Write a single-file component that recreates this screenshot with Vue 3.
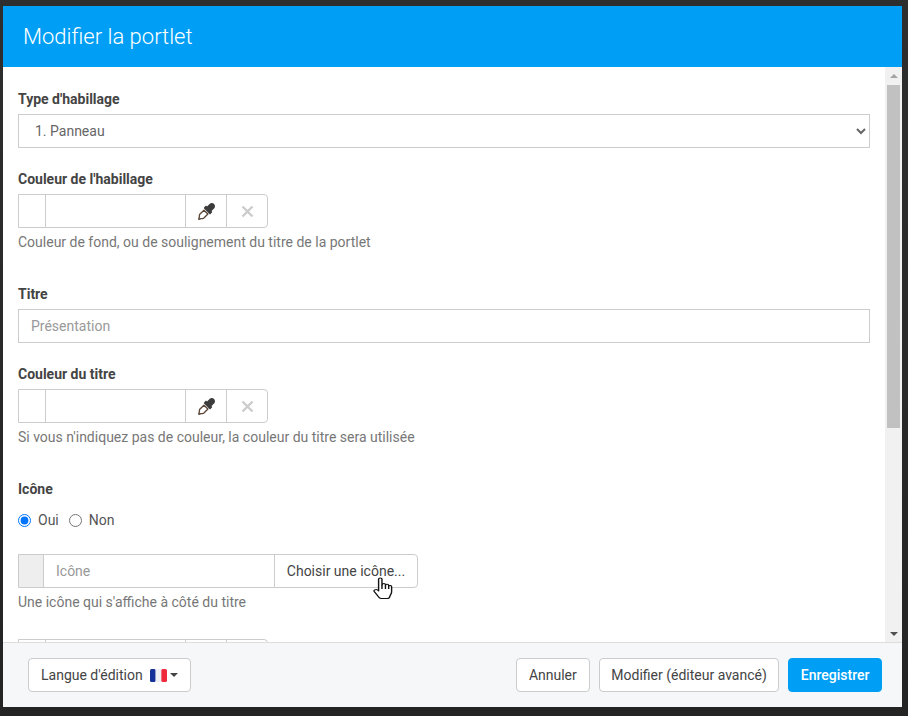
<script setup>
const head = 'M483.88 28.12c-37.47-37.5-98.28-37.5-135.75 0l-77.09 77.09-13.1-13.1c-9.44-9.44-24.65-9.31-33.94 0l-40.97 40.97c-9.37 9.37-9.37 24.57 0 33.94l161.94 161.94c9.44 9.44 24.65 9.31 33.94 0L419.88 288c9.37-9.37 9.37-24.57 0-33.94l-13.1-13.1 77.09-77.09c37.5-37.48 37.5-98.26.01-135.75z'
const tube = 'M60 333c-12 12-18 28-18 45v46L20 480l12 12 56-22h45c17 0 33-7 45-18l120-118-118-118L60 333z'
</script>

<template>
  <div class="page">
    <div class="modal">
      <header class="head">Modifier la portlet</header>
      <div class="middle">
        <div class="content">
          <div class="field f-type">
            <label>Type d'habillage</label>
            <select class="control select"><option>1. Panneau</option></select>
          </div>

          <div class="field f-color">
            <label>Couleur de l'habillage</label>
            <div class="group">
              <span class="swatch"></span>
              <input class="color-input" type="text" />
              <button class="addon pick"><svg width="17" height="17" viewBox="0 0 512 512"><path class="tube" :d="tube" /><path class="tip" :d="head" /></svg></button>
              <button class="addon clear"><svg width="13" height="13" viewBox="0 0 13 13"><path d="M1.500 1.500l10 10M11.500 1.500l-10 10" /></svg></button>
            </div>
            <p class="help">Couleur de fond, ou de soulignement du titre de la portlet</p>
          </div>

          <div class="field f-title">
            <label>Titre</label>
            <input class="control text" type="text" placeholder="Présentation" />
          </div>

          <div class="field f-color2">
            <label>Couleur du titre</label>
            <div class="group">
              <span class="swatch"></span>
              <input class="color-input" type="text" />
              <button class="addon pick"><svg width="17" height="17" viewBox="0 0 512 512"><path class="tube" :d="tube" /><path class="tip" :d="head" /></svg></button>
              <button class="addon clear"><svg width="13" height="13" viewBox="0 0 13 13"><path d="M1.500 1.500l10 10M11.500 1.500l-10 10" /></svg></button>
            </div>
            <p class="help">Si vous n'indiquez pas de couleur, la couleur du titre sera utilisée</p>
          </div>

          <div class="field f-icon">
            <label>Icône</label>
            <div class="radios">
              <span class="radio"><input type="radio" name="ic" checked /> Oui</span>
              <span class="radio"><input type="radio" name="ic" /> Non</span>
            </div>
            <div class="group icon-group">
              <span class="icon-swatch"></span>
              <input class="icon-input" type="text" placeholder="Icône" />
              <button class="choose">Choisir une icône...</button>
              <svg class="cursor" width="21" height="23" viewBox="0 0 15 24" preserveAspectRatio="none">
                <path d="M4 2.200c0-1.500 2.400-1.500 2.400 0v6.600l0.300-1c0-1.300 2.200-1.300 2.200 0.200v1l0.200-0.600c0-1.200 2.100-1.100 2.100 0.300v0.900c0.200-1 2.100-.9 2.100 0.500v5.400c0 2-1 3.200-1.400 5.200-.1 1-.9 1.800-2 1.800H6.200c-.9 0-1.600-.5-2-1.300L1 15.500c-1-1.700 1-3.400 2.300-1.900L4 14.500z" fill="#fff" stroke="#111" stroke-width="1" stroke-linejoin="round" />
                <path d="M6.400 8.500v4M8.900 9v3.500M11.200 9.500v3" stroke="#111" fill="none" />
              </svg>
            </div>
            <p class="help">Une icône qui s'affiche à côté du titre</p>
          </div>

          <div class="group f-last">
            <span class="swatch"></span>
            <input class="color-input" type="text" />
            <button class="addon pick"></button>
            <button class="addon clear"></button>
          </div>
        </div>

        <div class="scrollbar">
          <span class="arrow up"></span>
          <div class="track"><div class="thumb"></div></div>
          <span class="arrow down"></span>
        </div>
      </div>

      <footer class="foot">
        <button class="btn lang">
          Langue d'édition
          <svg class="flag" width="17" height="13" viewBox="0 0 18 13" preserveAspectRatio="none">
            <rect width="6" height="13" rx="1.500" fill="#16309a" />
            <rect x="6" width="6" height="13" fill="#f0f0f4" />
            <rect x="12" width="6" height="13" rx="1.500" fill="#ee2a3c" />
          </svg>
          <span class="caret"></span>
        </button>
        <div class="foot-right">
          <button class="btn">Annuler</button>
          <button class="btn advanced">Modifier (éditeur avancé)</button>
          <button class="btn primary">Enregistrer</button>
        </div>
      </footer>
    </div>
  </div>
</template>

<style>
html, body { margin: 0; padding: 0; background: #282828; }
</style>

<style scoped>
* { box-sizing: border-box; }
.page {
  width: 908px;
  height: 716px;
  padding: 6px 6px 9px 3px;
  background: linear-gradient(#2e2e2e, #242424);
  font-family: Roboto, "Liberation Sans", sans-serif;
  font-size: 14px;
  color: #444;
  overflow: hidden;
}
.modal {
  width: 899px;
  height: 701px;
  display: flex;
  flex-direction: column;
  background: #fff;
}
.head {
  height: 61px;
  flex: none;
  padding-left: 20px;
  display: flex;
  align-items: center;
  background: #009ff5;
  color: #fff;
  font-size: 22px;
  font-weight: 300;
}
.middle {
  flex: 1;
  min-height: 0;
  display: flex;
  overflow: hidden;
}
.content {
  flex: 1;
  min-width: 0;
  padding: 24px 15px 0;
  overflow: hidden;
}
.field label {
  display: block;
  height: 17px;
  line-height: 17px;
  margin-bottom: 6px;
  font-weight: 700;
  color: #444;
}
.f-color { margin-top: 23px; }
.f-title { margin-top: 35px; }
.f-color2 { margin-top: 23px; }
.f-icon { margin-top: 35px; }
.f-last { margin-top: 28px; }
.control {
  display: block;
  width: 100%;
  height: 34px;
  border: 1px solid #ccc;
  border-radius: 0;
  background: #fff;
  outline: none;
  font: 14px Roboto, "Liberation Sans", sans-serif;
  color: #666;
}
.select { padding: 0 8px 0 12px; }
.text { padding: 0 12px; }
.text::placeholder, .icon-input::placeholder { color: #999; opacity: 1; }
.group {
  position: relative;
  display: flex;
  width: 250px;
  height: 34px;
  border: 1px solid #ccc;
  border-radius: 0 4px 4px 0;
  background: #fff;
}
.swatch { width: 27px; flex: none; border-right: 1px solid #ccc; }
.color-input {
  width: 139px;
  flex: none;
  border: 0;
  outline: none;
  background: transparent;
  padding: 0;
}
.addon {
  display: flex;
  align-items: center;
  justify-content: center;
  flex: none;
  padding: 0;
  border: 0;
  border-left: 1px solid #ccc;
  background: transparent;
}
.pick { width: 41px; }
.tip { fill: #3c3c3c; }
.tube { fill: #fff; stroke: #5a4638; stroke-width: 40; stroke-linejoin: round; }
.clear { flex: 1; }
.clear path { stroke: #ccc; stroke-width: 2.400; fill: none; }
.help {
  margin: 6px 0 0;
  height: 17px;
  line-height: 17px;
  font-size: 14px;
  color: #777;
}
.radios {
  display: flex;
  gap: 10px;
  height: 17px;
  margin: 14px 0 25px;
  line-height: 17px;
  font-size: 14px;
  color: #555;
}
.radio { display: flex; align-items: center; gap: 7px; }
.radio input { width: 13px; height: 13px; margin: 0; accent-color: #0075ff; }
.icon-group { width: 400px; }
.icon-swatch { width: 25px; flex: none; background: #eee; border-right: 1px solid #ccc; }
.icon-input {
  width: 230px;
  flex: none;
  border: 0;
  outline: none;
  background: transparent;
  padding: 0 12px;
  font: 14px Roboto, "Liberation Sans", sans-serif;
}
.choose {
  flex: 1;
  padding: 0;
  border: 0;
  border-left: 1px solid #ccc;
  background: transparent;
  font: 14px Roboto, "Liberation Sans", sans-serif;
  color: #444;
}
.cursor { position: absolute; left: 354px; top: 22px; }
.scrollbar {
  width: 17px;
  flex: none;
  display: flex;
  flex-direction: column;
  background: #f1f1f1;
}
.arrow {
  height: 17px;
  flex: none;
  display: flex;
  align-items: center;
  justify-content: center;
}
.arrow::before {
  content: "";
  border-left: 4px solid transparent;
  border-right: 4px solid transparent;
}
.up::before { border-bottom: 4px solid #a3a3a3; }
.down::before { border-top: 4px solid #505050; }
.track { flex: 1; padding: 0 2px; }
.thumb { height: 343px; margin-top: 1px; background: #c1c1c1; }
.foot {
  height: 65px;
  flex: none;
  display: flex;
  align-items: center;
  justify-content: space-between;
  padding: 0 20px 0 25px;
  background: #f6f7f9;
  border-top: 1px solid #ddd;
}
.foot-right { display: flex; gap: 9px; }
.btn {
  height: 34px;
  padding: 0 12px;
  display: inline-flex;
  align-items: center;
  border: 1px solid #ccc;
  border-radius: 4px;
  background: #fff;
  font: 14px Roboto, "Liberation Sans", sans-serif;
  color: #444;
}
.advanced { padding: 0 11.500px; }
.flag { margin-left: 7px; }
.caret {
  margin-left: 3px;
  border-left: 4px solid transparent;
  border-right: 4px solid transparent;
  border-top: 4px solid #444;
}
.primary {
  padding: 0 11.500px;
  border-color: #009ff5;
  background: #009ff5;
  color: #fff;
  font-weight: 500;
}
</style>
